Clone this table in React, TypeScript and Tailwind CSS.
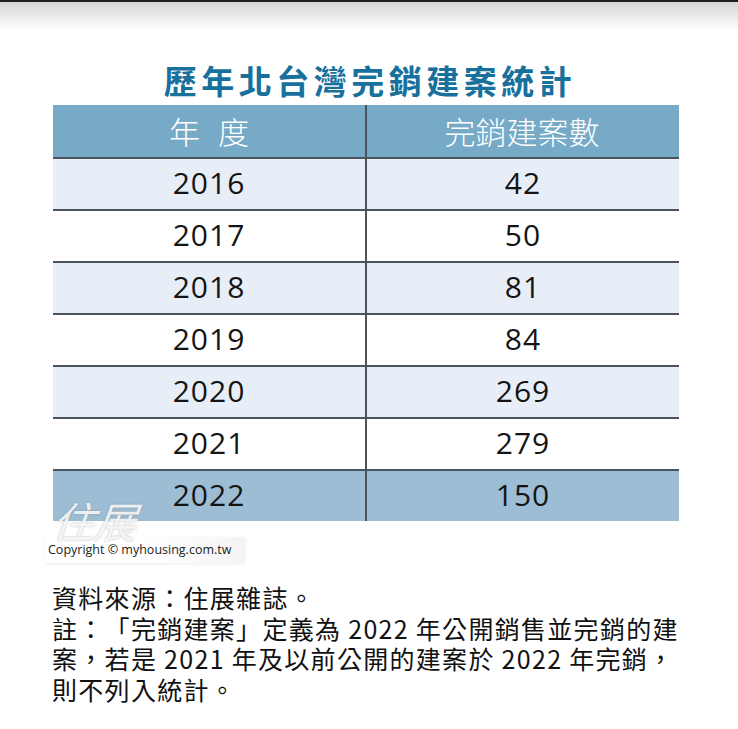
import React from "react";

const rows = [
  { y: "2016", n: "42", bg: "bg-[#e8eef7]" },
  { y: "2017", n: "50", bg: "bg-white" },
  { y: "2018", n: "81", bg: "bg-[#e8eef7]" },
  { y: "2019", n: "84", bg: "bg-white" },
  { y: "2020", n: "269", bg: "bg-[#e8eef7]" },
  { y: "2021", n: "279", bg: "bg-white" },
  { y: "2022", n: "150", bg: "bg-[#9dbdd4]" },
];

const cjk = { fontFamily: '"Noto Sans CJK TC", "Noto Sans", sans-serif' };
const num = { fontFamily: '"Open Sans", "DejaVu Sans", sans-serif' };

export default function App() {
  return (
    <div className="w-[738px] h-[729px] bg-white relative overflow-hidden flex flex-col">
      <div className="h-[30px] border-t-2 border-[#1f1f1f] bg-gradient-to-b from-[#d5d5d5] to-white" />
      <div
        className="mt-[31px] h-[38px] flex items-center justify-center text-[33px] font-bold text-[#18709c] tracking-[4.5px] leading-none pl-[2px]"
        style={cjk}
      >
        歷年北台灣完銷建案統計
      </div>
      <div className="mt-[6px] ml-[53px] w-[626px] relative">
        <div className="grid grid-cols-[312px_314px] h-[52px] bg-[#76aac7] text-white text-[31px]" style={cjk}>
          <div className="flex items-center justify-center gap-[18px] font-light">
            <span>年</span>
            <span>度</span>
          </div>
          <div className="flex items-center justify-center border-l-2 border-[#4b545c] font-light pr-[2px]">
            完銷建案數
          </div>
        </div>
        {rows.map((r) => (
          <div
            key={r.y}
            className={`grid grid-cols-[312px_314px] h-[52px] border-t-2 border-[#4b545c] ${r.bg} text-[30px] text-[#141414] tracking-[1px]`}
            style={num}
          >
            <div className="flex items-center justify-center pb-[3px]">{r.y}</div>
            <div className="flex items-center justify-center border-l-2 border-[#4b545c] pb-[3px]">{r.n}</div>
          </div>
        ))}
        <div
          className="absolute left-[0px] bottom-[-20px] text-[42px] italic text-white/85 -skew-x-6 tracking-[0px] leading-none"
          style={{ ...cjk, textShadow: "0 0 2px rgba(110,110,110,0.55)" }}
        >
          住展
        </div>
      </div>
      <div className="mt-[16px] ml-[45px] w-[200px] h-[26px] flex items-center pl-[3px] bg-gradient-to-r from-white via-white to-[#f4f4f4] shadow-[0_1px_3px_rgba(0,0,0,0.08)]">
        <span className="text-[12.5px] text-[#222] leading-none" style={{ fontFamily: '"Open Sans", sans-serif' }}>
          Copyright © myhousing.com.tw
        </span>
      </div>
      <div
        className="mt-[19px] ml-[52px] text-[25px] leading-[30.7px] text-[#111] whitespace-nowrap tracking-[1.3px] [text-spacing-trim:space-all]"
        style={cjk}
      >
        <div>資料來源：住展雜誌。</div>
        <div>註：「完銷建案」定義為 2022 年公開銷售並完銷的建</div>
        <div>案，若是 2021 年及以前公開的建案於 2022 年完銷，</div>
        <div>則不列入統計。</div>
      </div>
    </div>
  );
}
